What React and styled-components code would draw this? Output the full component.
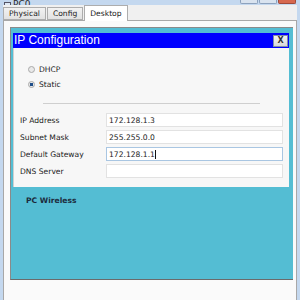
import React from "react";
import styled, { createGlobalStyle } from "styled-components";

const Global = createGlobalStyle`
  html, body { margin: 0; padding: 0; background: #ffffff; }
  body { width: 300px; height: 300px; overflow: hidden; }
  * { box-sizing: border-box; }
`;

const Window = styled.div`
  width: 300px;
  height: 300px;
  overflow: hidden;
  display: flex;
  flex-direction: column;
  background: #c4d8ef;
  font-family: "DejaVu Sans", Verdana, sans-serif;
`;

const TitleBar = styled.div`
  height: 5px;
  flex: none;
  display: flex;
  align-items: flex-end;
  justify-content: space-between;
  overflow: hidden;
  padding: 0 4px;
`;

const TitleLeft = styled.div`
  display: flex;
  align-items: flex-end;
  gap: 2px;
  margin-bottom: -4px;
  font-size: 9px;
  color: #2a2a2a;
  line-height: 9px;
`;

const WinButtons = styled.div`
  display: flex;
  gap: 1px;
  align-self: flex-start;
`;

const WinButton = styled.div`
  width: 18px;
  height: 4px;
  border: 1px solid ${(p) => (p.$close ? "#a04a3a" : "#8da2bd")};
  border-top: none;
  border-radius: 0 0 2px 2px;
  background: ${(p) => (p.$close ? "#d7684f" : "#d9e3ef")};
`;

const Body = styled.div`
  flex: 1;
  margin: 0 3px;
  background: #f0f0f0;
  display: flex;
  flex-direction: column;
`;

const TabRow = styled.div`
  height: 15px;
  flex: none;
  display: flex;
  align-items: flex-end;
  gap: 1px;
  position: relative;
  z-index: 1;
`;

const Tab = styled.div`
  height: ${(p) => (p.$active ? 16 : 13)}px;
  margin-bottom: ${(p) => (p.$active ? -1 : 0)}px;
  padding: 0 5px;
  display: flex;
  align-items: center;
  font-size: 7.6px;
  color: #1a1a1a;
  border: 1px solid #adadad;
  border-bottom: ${(p) => (p.$active ? "none" : "1px solid #adadad")};
  background: ${(p) => (p.$active ? "#ffffff" : "linear-gradient(#f2f2f2, #e2e2e2)")};
`;

const TabPage = styled.div`
  flex: 1;
  background: #fafafa;
  border: 1px solid #a8a8a8;
  border-bottom: none;
  padding: 6px 3px 20px 6px;
  display: flex;
  flex-direction: column;
`;

const CyanPanel = styled.div`
  flex: 1;
  background: #54bdd3;
  border-top: 1px solid #8a8a8a;
  border-left: 1px solid #8a8a8a;
  border-bottom: 1px solid #6b6b6b;
  padding: 5px 4px 0 2px;
  display: flex;
  flex-direction: column;
`;

const Dialog = styled.div`
  display: flex;
  flex-direction: column;
`;

const DialogTitle = styled.div`
  height: 15px;
  background: #0000ff;
  display: flex;
  align-items: center;
  justify-content: space-between;
  padding: 0 1px;
  font-family: "Liberation Sans", Arial, sans-serif;
  font-size: 12px;
  color: #ffffff;
  line-height: 15px;
`;

const CloseButton = styled.div`
  width: 15px;
  height: 12px;
  background: linear-gradient(#f4f4f4, #d8d8d8);
  border: 1px solid #7f8fa8;
  display: flex;
  align-items: center;
  justify-content: center;
  font-family: "DejaVu Sans", sans-serif;
  font-size: 8px;
  font-weight: bold;
  color: #333;
`;

const DialogBody = styled.div`
  height: 139px;
  background: #f7f7f7;
  border-left: 1px solid #d0d0d0;
  display: flex;
  flex-direction: column;
  padding: 14px 6px 0 6px;
`;

const RadioRow = styled.label`
  display: flex;
  align-items: center;
  gap: 4px;
  height: 15px;
  padding-left: 8px;
  font-size: 7.6px;
  color: #222;
`;

const Radio = styled.span`
  width: 7px;
  height: 7px;
  border-radius: 50%;
  border: 1px solid #a9a9a9;
  background: ${(p) =>
    p.$checked
      ? "radial-gradient(circle, #1f4f8a 0 1.6px, #e8e8e8 2px)"
      : "#e9e9e9"};
`;

const Separator = styled.div`
  margin: 11px 23px 0 23px;
  height: 1px;
  background: #cfcfcf;
`;

const Fields = styled.div`
  margin-top: 9px;
  display: flex;
  flex-direction: column;
  gap: 3px;
`;

const FieldRow = styled.div`
  display: grid;
  grid-template-columns: 86px 177px;
  align-items: center;
  height: 14px;
`;

const Label = styled.span`
  font-size: 7.6px;
  color: #222;
`;

const Input = styled.div`
  height: 14px;
  background: #ffffff;
  border: 1px solid ${(p) => (p.$focus ? "#a9c6e2" : "#e2e2e2")};
  font-size: 7.6px;
  color: #222;
  display: flex;
  align-items: center;
  padding-left: 2px;
`;

const Caret = styled.span`
  display: inline-block;
  width: 1px;
  height: 9px;
  background: #111;
  margin-left: 0.5px;
`;

const Wireless = styled.div`
  margin: 9px 0 0 13px;
  font-size: 7.6px;
  font-weight: bold;
  color: #1c2b3c;
`;

const PcIcon = () => (
  <svg width="7" height="7" viewBox="0 0 7 7">
    <rect x="0.5" y="0.5" width="6" height="4" fill="#dfe9f5" stroke="#556" strokeWidth="1" />
    <rect x="2" y="5" width="3" height="2" fill="#556" />
  </svg>
);

const fields = [
  { label: "IP Address", value: "172.128.1.3" },
  { label: "Subnet Mask", value: "255.255.0.0" },
  { label: "Default Gateway", value: "172.128.1.1", focus: true },
  { label: "DNS Server", value: "" },
];

export default function App() {
  return (
    <>
      <Global />
      <Window>
        <TitleBar>
          <TitleLeft>
            <PcIcon />
            <span>PC0</span>
          </TitleLeft>
          <WinButtons>
            <WinButton />
            <WinButton />
            <WinButton $close />
          </WinButtons>
        </TitleBar>
        <Body>
          <TabRow>
            <Tab>Physical</Tab>
            <Tab>Config</Tab>
            <Tab $active>Desktop</Tab>
          </TabRow>
          <TabPage>
            <CyanPanel>
              <Dialog>
                <DialogTitle>
                  <span>IP Configuration</span>
                  <CloseButton>X</CloseButton>
                </DialogTitle>
                <DialogBody>
                  <RadioRow>
                    <Radio />
                    DHCP
                  </RadioRow>
                  <RadioRow>
                    <Radio $checked />
                    Static
                  </RadioRow>
                  <Separator />
                  <Fields>
                    {fields.map((f) => (
                      <FieldRow key={f.label}>
                        <Label>{f.label}</Label>
                        <Input $focus={f.focus}>
                          {f.value}
                          {f.focus && <Caret />}
                        </Input>
                      </FieldRow>
                    ))}
                  </Fields>
                </DialogBody>
              </Dialog>
              <Wireless>PC Wireless</Wireless>
            </CyanPanel>
          </TabPage>
        </Body>
      </Window>
    </>
  );
}
